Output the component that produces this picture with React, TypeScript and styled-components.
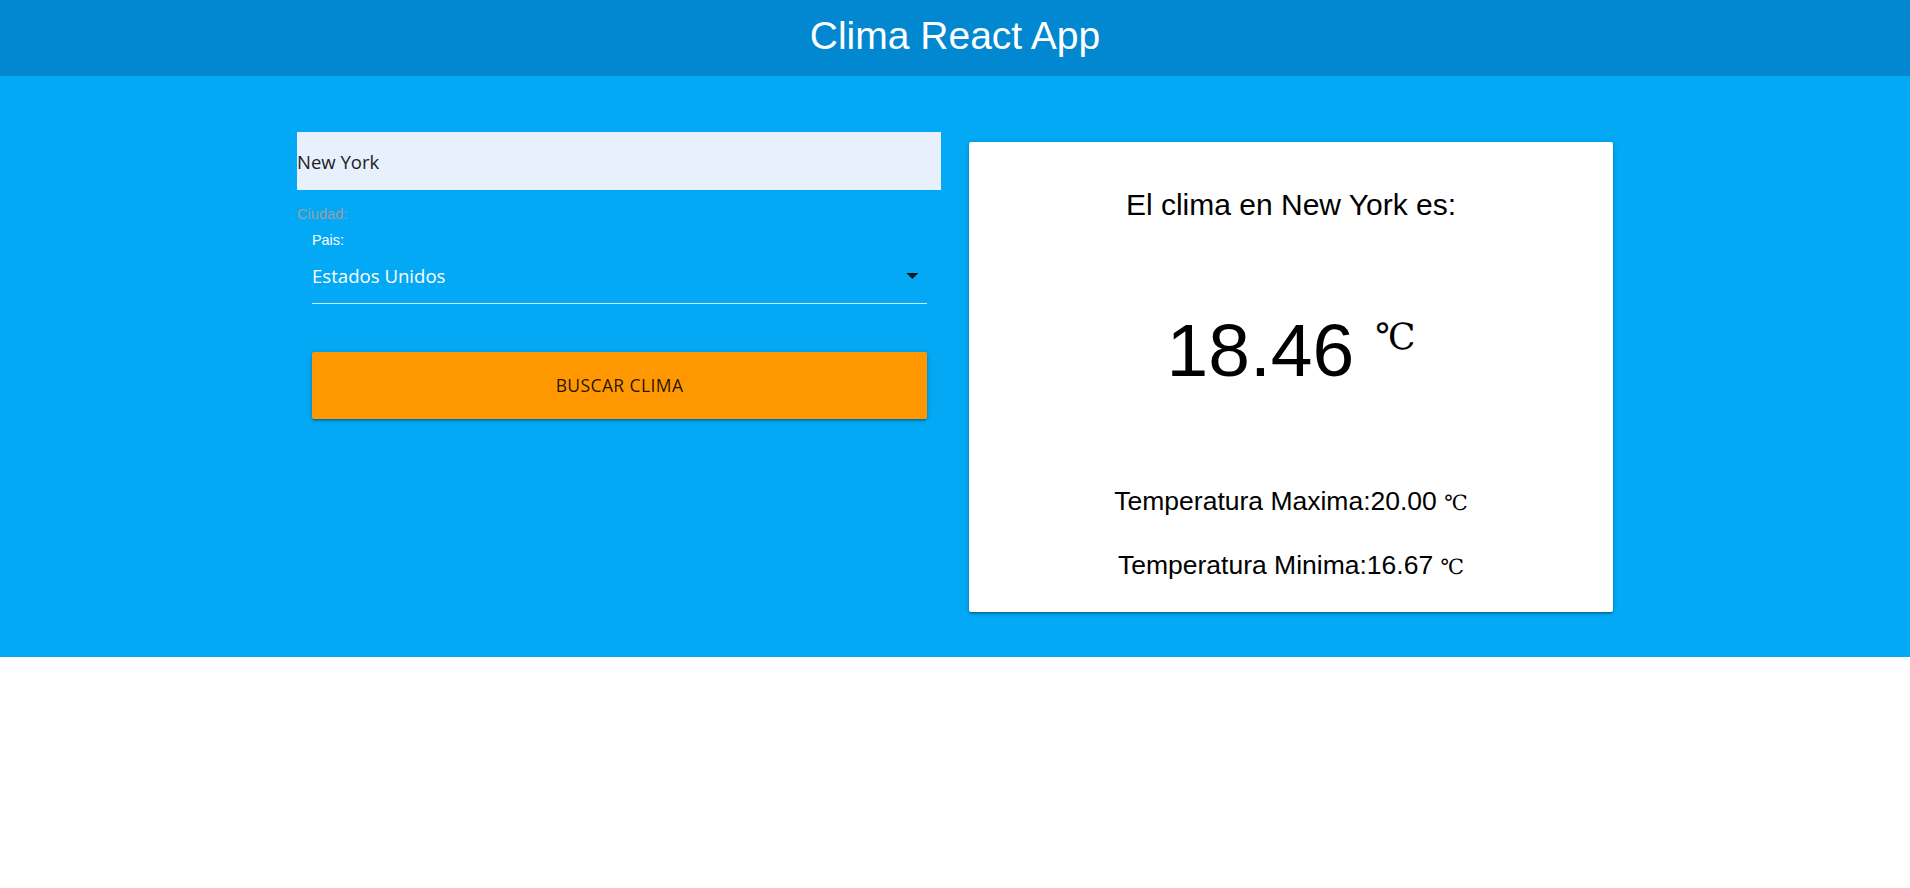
import React from "react";
import styled, { createGlobalStyle } from "styled-components";

const GlobalStyle = createGlobalStyle`
  html, body { margin: 0; padding: 0; background: #ffffff; }
  body { font-family: "Liberation Sans", Arial, sans-serif; }
  *, *::before, *::after { box-sizing: border-box; }
`;

const Header = styled.header`
  height: 76px;
  padding-bottom: 5px;
  background: #0288d1;
  display: flex;
  align-items: center;
  justify-content: center;
`;

const Title = styled.h1`
  margin: 0;
  font-family: "Liberation Sans", Arial, sans-serif;
  font-weight: 400;
  font-size: 39px;
  line-height: 1;
  color: #ffffff;
`;

const Main = styled.main`
  background: #03a9f4;
  padding: 56px 0 45px;
`;

const Grid = styled.div`
  display: grid;
  grid-template-columns: 644px 644px;
  column-gap: 28px;
  justify-content: center;
  align-items: start;
`;

const FormColumn = styled.form`
  display: flex;
  flex-direction: column;
`;

const CityInput = styled.input`
  width: 100%;
  height: 58px;
  margin: 0;
  padding: 0;
  border: none;
  outline: none;
  background: #e8f0fe;
  font-family: "Open Sans", "Noto Sans", sans-serif;
  font-size: 18.5px;
  color: #212121;
`;

const CityLabel = styled.label`
  margin-top: 16px;
  font-family: "Liberation Sans", Arial, sans-serif;
  font-size: 14.6px;
  line-height: 1.2;
  color: #9e9e9e;
`;

const SelectField = styled.div`
  margin-top: 9px;
  padding: 0 14px 0 15px;
  display: flex;
  flex-direction: column;
`;

const SelectLabel = styled.span`
  font-family: "Liberation Sans", Arial, sans-serif;
  font-size: 14.4px;
  line-height: 14.4px;
  color: #ffffff;
`;

const SelectBox = styled.div`
  height: 57px;
  padding-top: 1px;
  display: flex;
  align-items: center;
  justify-content: space-between;
  border-bottom: 1px solid rgba(255, 255, 255, 0.8);
  font-family: "Open Sans", "Noto Sans", sans-serif;
  font-size: 18.6px;
  color: #ffffff;
  cursor: pointer;
`;

const ArrowIcon = styled.svg`
  width: 28.8px;
  height: 28.8px;
  fill: rgba(0, 0, 0, 0.87);
  flex: none;
`;

const SearchButton = styled.button`
  margin-top: 48px;
  height: 67px;
  width: 100%;
  border: none;
  border-radius: 2px;
  background: #ff9800;
  color: rgba(0, 0, 0, 0.87);
  font-family: "Open Sans", "Noto Sans", sans-serif;
  font-size: 17.5px;
  letter-spacing: 0.4px;
  text-transform: uppercase;
  cursor: pointer;
  box-shadow: 0 2px 2px 0 rgba(0, 0, 0, 0.14), 0 3px 1px -2px rgba(0, 0, 0, 0.12),
    0 1px 5px 0 rgba(0, 0, 0, 0.2);
`;

const Card = styled.section`
  margin-top: 10px;
  height: 470px;
  padding-top: 45px;
  background: #ffffff;
  border-radius: 2px;
  box-shadow: 0 2px 2px 0 rgba(0, 0, 0, 0.14), 0 3px 1px -2px rgba(0, 0, 0, 0.12),
    0 1px 5px 0 rgba(0, 0, 0, 0.2);
  text-align: center;
  color: #000000;
  font-family: "Liberation Sans", Arial, sans-serif;
`;

const CardHeading = styled.h2`
  margin: 0;
  font-size: 30px;
  font-weight: 400;
  line-height: 35px;
`;

const CurrentTemp = styled.p`
  margin: 89.5px 0 0;
  font-size: 75px;
  line-height: 76px;
`;

const Range = styled.p<{ $top: number }>`
  margin: ${(p) => p.$top}px 0 0;
  font-size: 26.5px;
  line-height: 30.6px;
`;

const Unit = styled.span<{ $size: number; $raise: number }>`
  font-family: "Liberation Serif", "DejaVu Serif", serif;
  font-size: ${(p) => p.$size}px;
  line-height: 1;
  vertical-align: ${(p) => p.$raise}px;
`;

export default function App() {
  return (
    <>
      <GlobalStyle />
      <Header>
        <Title>Clima React App</Title>
      </Header>
      <Main>
        <Grid>
          <FormColumn onSubmit={(e) => e.preventDefault()}>
            <CityInput id="ciudad" type="text" defaultValue="New York" />
            <CityLabel htmlFor="ciudad">Ciudad:</CityLabel>
            <SelectField>
              <SelectLabel>Pais:</SelectLabel>
              <SelectBox>
                <span>Estados Unidos</span>
                <ArrowIcon viewBox="0 0 24 24">
                  <path d="M7 10l5 5 5-5z" />
                </ArrowIcon>
              </SelectBox>
              <SearchButton type="submit">Buscar Clima</SearchButton>
            </SelectField>
          </FormColumn>
          <Card>
            <CardHeading>El clima en New York es:</CardHeading>
            <CurrentTemp>
              18.46 <Unit $size={36} $raise={27}>℃</Unit>
            </CurrentTemp>
            <Range $top={98}>
              Temperatura Maxima:20.00 <Unit $size={21} $raise={0}>℃</Unit>
            </Range>
            <Range $top={34}>
              Temperatura Minima:16.67 <Unit $size={21} $raise={0}>℃</Unit>
            </Range>
          </Card>
        </Grid>
      </Main>
    </>
  );
}
